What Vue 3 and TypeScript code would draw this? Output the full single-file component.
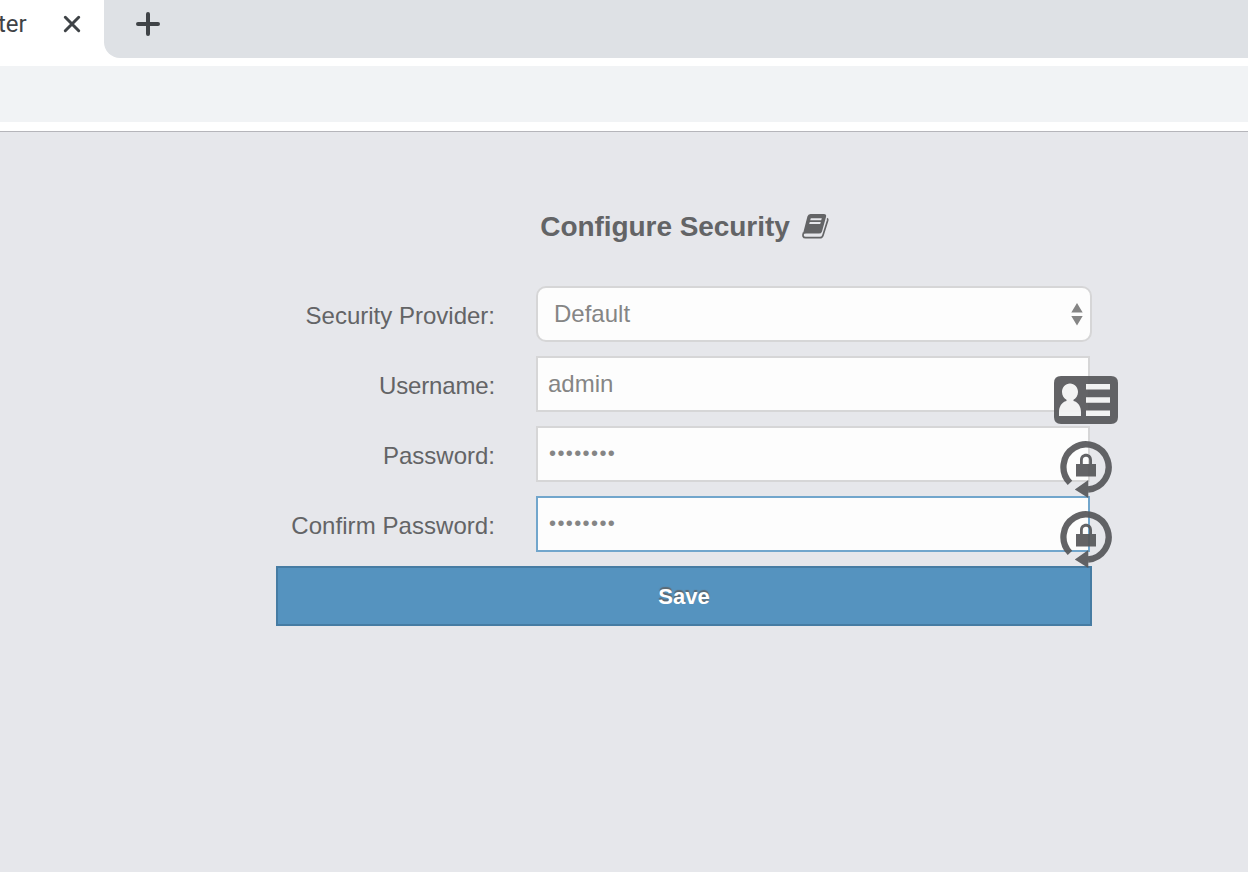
<script setup lang="ts">
import { ref } from 'vue'

interface Field {
  id: string
  label: string
  type: 'select' | 'text' | 'password'
  icon?: 'card' | 'lock'
  active?: boolean
}

const fields: Field[] = [
  { id: 'provider', label: 'Security Provider:', type: 'select' },
  { id: 'username', label: 'Username:', type: 'text', icon: 'card' },
  { id: 'password', label: 'Password:', type: 'password', icon: 'lock' },
  { id: 'confirm', label: 'Confirm Password:', type: 'password', icon: 'lock', active: true },
]

const values = ref<Record<string, string>>({
  provider: 'Default',
  username: 'admin',
  password: 'password',
  confirm: 'password',
})
</script>

<template>
  <div class="window">
    <header class="tabs">
      <div class="tab">
        <span class="tab-title">ter</span>
        <svg class="close" width="20" height="20" viewBox="0 0 20 20"><path d="M3.3 3.3 16.7 16.7M16.7 3.3 3.3 16.7" /></svg>
      </div>
      <div class="strip">
        <svg width="24" height="24" viewBox="0 0 24 24"><path d="M12 2V22M2 12H22" /></svg>
      </div>
    </header>
    <div class="toolbar"></div>
    <main class="page">
      <form class="form" @submit.prevent>
        <h1 class="title">
          <span class="heading">Configure Security</span>
          <svg class="book" width="27" height="26" viewBox="0 0 27 26">
            <path class="solid" fill-rule="evenodd" d="M8.5 0H21.8Q24.8 0 24 2.9L20 17.4Q19.3 19.6 17 19.6H4.2Q1.8 19.6 .8 20.5L5.4 2.5Q6.1 0 8.5 0ZM8.8 4.2 8.2 6.2H19.2L19.8 4.2ZM7.8 8 7.2 10H18.2L18.8 8Z" />
            <path class="line" d="M1.6 18.5Q-.3 23.7 3.6 23.7H17.9Q20.3 23.7 21 21.2L25.7 6.2Q26 5 25.1 4.4" />
          </svg>
        </h1>
        <div v-for="f in fields" :key="f.id" class="row">
          <label :for="f.id" :class="f.id">{{ f.label }}</label>
          <div class="control" :class="{ wide: f.type === 'select' }">
            <template v-if="f.type === 'select'">
              <select :id="f.id" v-model="values[f.id]"><option>Default</option></select>
              <svg class="arrows" width="12" height="24" viewBox="0 0 12 24"><path d="M6 1 11.7 10.5H.3ZM.3 14H11.7L6 23.5Z" /></svg>
            </template>
            <input v-else :id="f.id" v-model="values[f.id]" :type="f.type" :class="{ active: f.active, secret: f.type === 'password' }" />
            <svg v-if="f.icon === 'card'" class="badge card" width="64" height="48" viewBox="0 0 64 48">
              <path fill-rule="evenodd" d="M7 0H57Q64 0 64 7V41Q64 48 57 48H7Q0 48 0 41V7Q0 0 7 0Z" />
              <path class="light" d="M16 7.5C20.6 7.5 24 11.2 24 16C24 19.5 22 22.3 19.5 23.7V25C24.5 26.2 27 31 27 36V40H5V36C5 31 7.5 26.2 12.5 25V23.7C10 22.3 8 19.5 8 16C8 11.2 11.4 7.5 16 7.5ZM32 8H56V13.5H32ZM32 21.3H56V26.8H32ZM32 34.5H56V40H32Z" />
            </svg>
            <svg v-if="f.icon === 'lock'" class="badge lock" width="52" height="58" viewBox="0 0 52 58">
              <path class="ring" d="M10 41.9A22.6 22.6 0 1 1 28 48.5" />
              <path fill-rule="evenodd" d="M28.3 39V57L14.8 48.5ZM16 23H20V19C20 10.5 32 10.5 32 19V23H36V35.5H16ZM22.8 23H29.2V19C29.2 14.7 22.8 14.7 22.8 19Z" />
            </svg>
          </div>
        </div>
        <button class="save" type="submit">Save</button>
      </form>
    </main>
  </div>
</template>

<style>
body { margin: 0; overflow: hidden; }
</style>

<style scoped>
* { box-sizing: border-box; }
.window { width: 1248px; height: 872px; display: flex; flex-direction: column; background: #fff; font-family: "Liberation Sans", Arial, sans-serif; color: #636466; overflow: hidden; }
.tabs { display: flex; height: 58px; flex: none; }
.tab { width: 104px; height: 48px; display: flex; align-items: center; justify-content: space-between; padding-right: 22px; }
.tab-title { font: 24px/28px Roboto, sans-serif; color: #3f4347; margin-left: -2px; }
.tabs svg { stroke: #3f4347; stroke-width: 3; stroke-linecap: round; fill: none; }
.tabs .strip svg { display: block; stroke-width: 4; }
.strip { flex: 1; background: #dee1e5; border-bottom-left-radius: 16px; padding: 12px 32px; }
.toolbar { flex: none; height: 56px; margin: 8px 0 9px; background: #f1f3f5; }
.page { flex: 1; border-top: 1px solid #b5b5ba; background: #e6e7eb; padding: 75px 156px 0 276px; }
.form { display: flex; flex-direction: column; gap: 14px; }
.title { display: flex; justify-content: center; align-items: center; gap: 12px; height: 40px; margin: 0 0 25px; padding-left: 1px; font-size: 28px; line-height: 40px; font-weight: 700; color: #636466; }
.heading { letter-spacing: -0.06px; }
.book { display: block; overflow: visible; }
.solid { fill: #636466; }
.line { fill: none; stroke: #636466; stroke-width: 1.7; }
.row { display: flex; height: 56px; gap: 41px; }
label { width: 219px; text-align: right; font-size: 24px; line-height: 60px; white-space: nowrap; }
.username { letter-spacing: -0.15px; }
.confirm { letter-spacing: 0.06px; }
.control { position: relative; width: 554px; height: 56px; }
.control.wide { width: 556px; }
input, select { display: block; width: 100%; height: 56px; margin: 0; border: 2px solid #d6d6d7; background: #fdfdfd; color: #858585; font: 24px "Liberation Sans", Arial, sans-serif; outline: none; appearance: none; border-radius: 0; padding: 0 10px; }
select { border-radius: 10px; padding: 0 16px 2px; opacity: 1; }
input.secret { font-size: 20px; letter-spacing: 1.4px; padding: 0 10px 2px 11px; }
input.active { border-color: #72a6cc; }
.arrows { position: absolute; right: 9.5px; top: 16px; fill: #858585; }
.badge { position: absolute; fill: #56575a; opacity: .92; z-index: 1; }
.card { left: 518px; top: 20px; }
.lock { left: 524px; top: 15px; }
.light { fill: #fff; opacity: .93; }
.ring { fill: none; stroke: #56575a; stroke-width: 6.3; }
.save { height: 60px; border: 2px solid #467ca3; background: #5593bf; color: #fff; font: bold 22px "Liberation Sans", Arial, sans-serif; text-shadow: 0 -2px 1px #5d6870; padding: 1px 0 0; }
</style>
